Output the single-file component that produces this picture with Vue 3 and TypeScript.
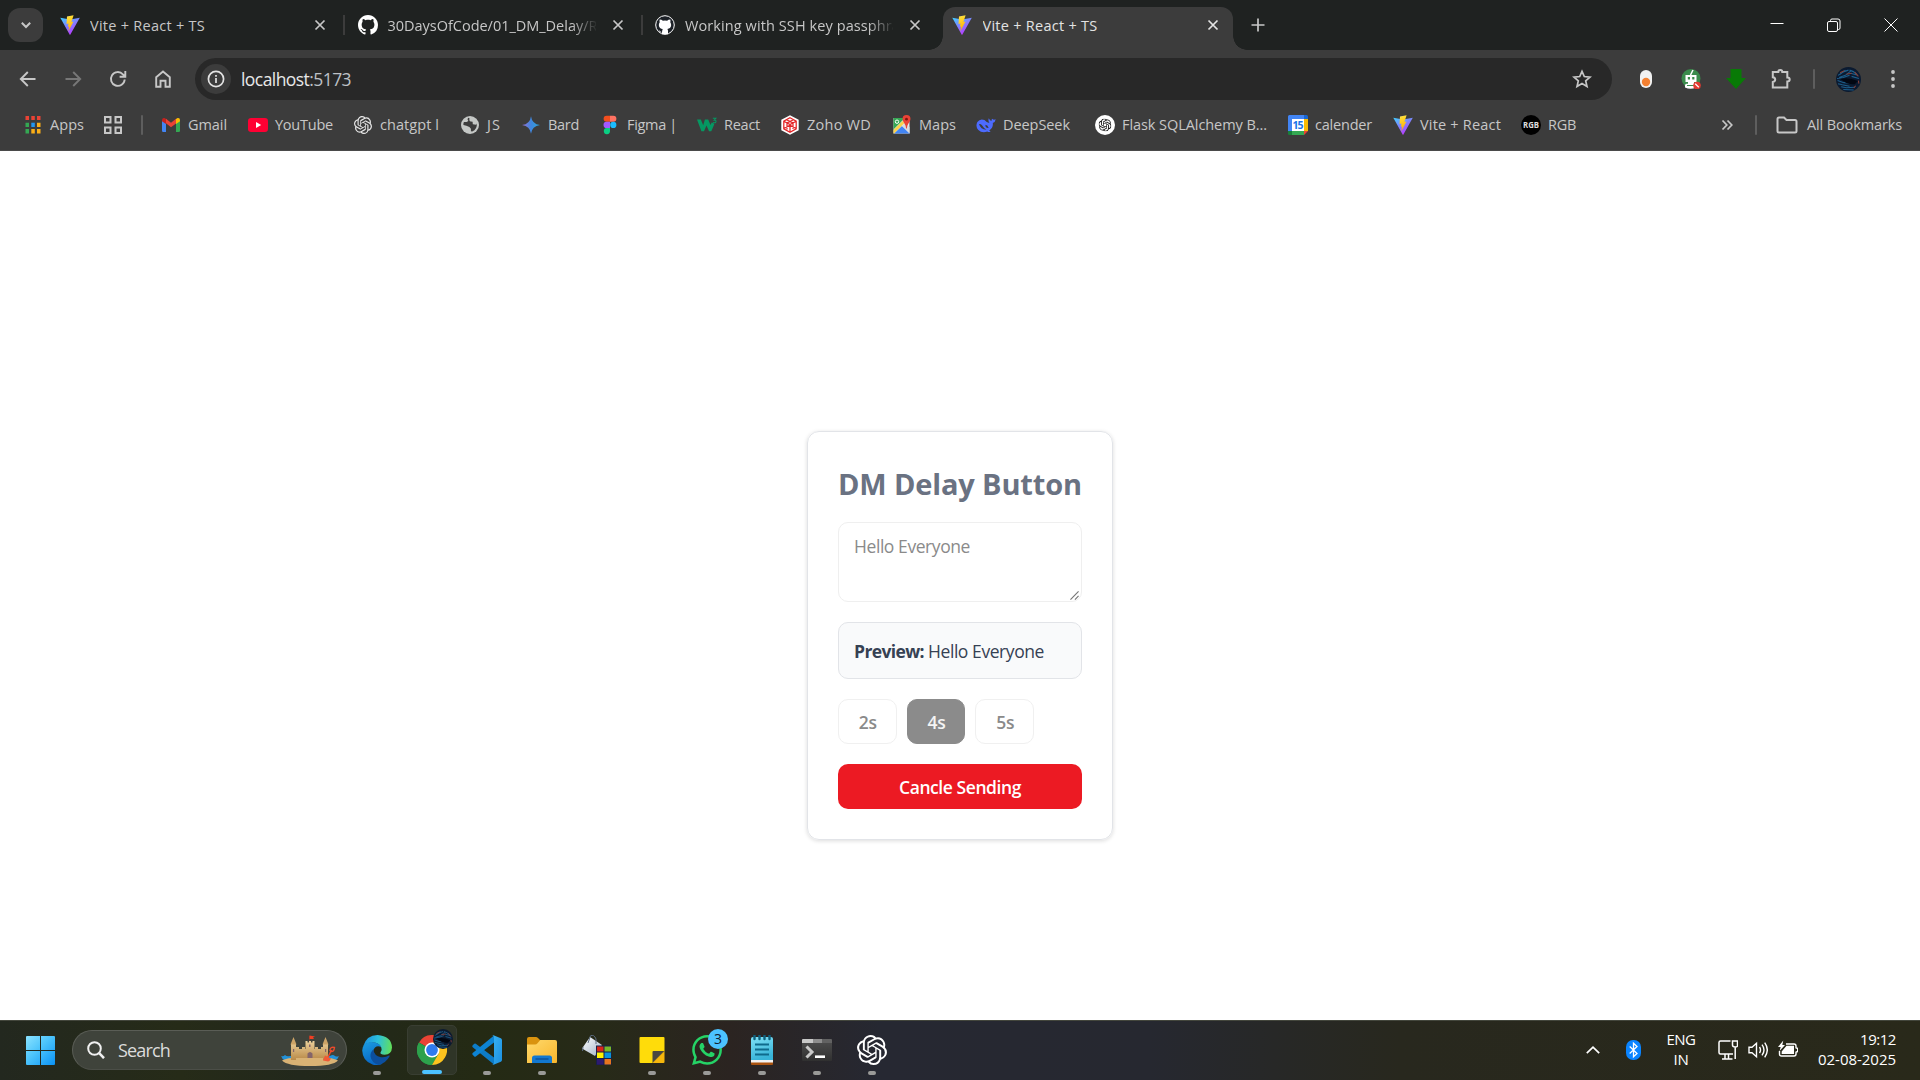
<script setup lang="ts">
import type { Directive } from 'vue'

interface Tab { icon: string; title: string; w: number; active?: boolean; cut?: boolean }
interface Bookmark { icon: string; label: string; pitch: number; w: number }
interface TaskApp { icon: string; state: 'idle' | 'open' | 'active' }

const tabs: Tab[] = [
  { icon: 'vite', title: 'Vite + React + TS', w: 115 },
  { icon: 'github', title: '30DaysOfCode/01_DM_Delay/Re', w: 218, cut: true },
  { icon: 'githubdocs', title: 'Working with SSH key passphras', w: 222, cut: true },
  { icon: 'vite', title: 'Vite + React + TS', w: 115, active: true },
]

const bookmarks: Bookmark[] = [
  { icon: 'gmail', label: 'Gmail', pitch: 87, w: 39 },
  { icon: 'youtube', label: 'YouTube', pitch: 105, w: 58 },
  { icon: 'openai', label: 'chatgpt l', pitch: 107, w: 59 },
  { icon: 'globe', label: 'JS', pitch: 61, w: 14 },
  { icon: 'bard', label: 'Bard', pitch: 79, w: 31 },
  { icon: 'figma', label: 'Figma |', pitch: 97, w: 50 },
  { icon: 'w3', label: 'React', pitch: 83, w: 36 },
  { icon: 'zoho', label: 'Zoho WD', pitch: 112, w: 64 },
  { icon: 'maps', label: 'Maps', pitch: 84, w: 37 },
  { icon: 'deepseek', label: 'DeepSeek', pitch: 119, w: 67 },
  { icon: 'flask', label: 'Flask SQLAlchemy B...', pitch: 193, w: 145 },
  { icon: 'calendar', label: 'calender', pitch: 105, w: 57 },
  { icon: 'vite', label: 'Vite + React', pitch: 128, w: 81 },
  { icon: 'rgb', label: 'RGB', pitch: 80, w: 28 },
]

const apps: TaskApp[] = [
  { icon: 'edge', state: 'open' },
  { icon: 'chrome', state: 'active' },
  { icon: 'vscode', state: 'open' },
  { icon: 'explorer', state: 'open' },
  { icon: 'paint', state: 'idle' },
  { icon: 'notes', state: 'open' },
  { icon: 'whatsapp', state: 'open' },
  { icon: 'notepad', state: 'open' },
  { icon: 'terminal', state: 'open' },
  { icon: 'openai', state: 'open' },
]

const delays = [2, 4, 5]
const selected = 4
const message = 'Hello Everyone'

// Tracks a label's letters so that it takes up exactly the given width.
const vFit: Directive<HTMLElement, number> = {
  mounted(el, { value }) {
    const count = (el.textContent ?? '').trim().length
    const natural = el.getBoundingClientRect().width
    el.style.letterSpacing = `${((value - natural) / count).toFixed(3)}px`
  },
}
</script>

<template>
  <svg class="sprite" aria-hidden="true">
    <defs>
      <linearGradient id="gv1" x1="0" y1="0" x2="0.6" y2="1"><stop offset="0" stop-color="#41d1ff" /><stop offset="1" stop-color="#bd34fe" /></linearGradient>
      <linearGradient id="gv2" x1="0.4" y1="0" x2="0.6" y2="1"><stop offset="0" stop-color="#ffea83" /><stop offset="0.1" stop-color="#ffdd35" /><stop offset="1" stop-color="#ffa800" /></linearGradient>
      <linearGradient id="gbard" x1="0" y1="0" x2="1" y2="0"><stop offset="0" stop-color="#9a72d8" /><stop offset="0.5" stop-color="#3f86dd" /><stop offset="1" stop-color="#2ba6d8" /></linearGradient>
      <linearGradient id="gwin" x1="0" y1="0" x2="1" y2="1"><stop offset="0" stop-color="#8be3ff" /><stop offset="0.45" stop-color="#4cc4fc" /><stop offset="1" stop-color="#0a92f5" /></linearGradient>
      <linearGradient id="gedge1" x1="0" y1="0.4" x2="1" y2="0.5"><stop offset="0" stop-color="#1b8ee0" /><stop offset="0.5" stop-color="#2cc0dc" /><stop offset="1" stop-color="#62e05a" /></linearGradient>
      <linearGradient id="gedge2" x1="0" y1="0" x2="0.4" y2="1"><stop offset="0" stop-color="#1b9de2" /><stop offset="1" stop-color="#0866c4" /></linearGradient>
      <linearGradient id="gfold" x1="0" y1="0" x2="1" y2="1"><stop offset="0" stop-color="#ffd96c" /><stop offset="1" stop-color="#f8b62c" /></linearGradient>
      <linearGradient id="gpad" x1="0" y1="0" x2="0.3" y2="1"><stop offset="0" stop-color="#7fe0f5" /><stop offset="1" stop-color="#38b4d8" /></linearGradient>
      <linearGradient id="gterm" x1="0" y1="0" x2="0" y2="1"><stop offset="0" stop-color="#4a4a4a" /><stop offset="1" stop-color="#303030" /></linearGradient>
      <linearGradient id="gbucket" x1="0" y1="0" x2="1" y2="1"><stop offset="0" stop-color="#ffffff" /><stop offset="1" stop-color="#9fb0c6" /></linearGradient>
      <linearGradient id="gsand" x1="0" y1="0" x2="0" y2="1"><stop offset="0" stop-color="#ecd09a" /><stop offset="1" stop-color="#b98a48" /></linearGradient>
      <linearGradient id="gcode" x1="0" y1="0" x2="1" y2="1"><stop offset="0" stop-color="#3bb4f4" /><stop offset="1" stop-color="#1b8fe0" /></linearGradient>
    </defs>
    <symbol id="vite" viewBox="0 0 20 20"><path d="M.3 2.8 9.6 19.6q.4.6.8 0L19.8 2.8 10.2 4.5Z" fill="url(#gv1)" /><path d="M13.6.2 7 1.5 6.5 9l2-.4-.6 3.2 1.3-.4-1 5.1 5.3-9.9-2.1.4Z" fill="url(#gv2)" /></symbol>
    <symbol id="github" viewBox="0 0 16 16"><path fill="#fff" d="M8 0C3.58 0 0 3.58 0 8c0 3.54 2.29 6.53 5.47 7.59.4.07.55-.17.55-.38 0-.19-.01-.82-.01-1.49-2.01.37-2.53-.49-2.69-.94-.09-.23-.48-.94-.82-1.13-.28-.15-.68-.52-.01-.53.63-.01 1.08.58 1.23.82.72 1.21 1.87.87 2.33.66.07-.52.28-.87.51-1.07-1.78-.2-3.64-.89-3.64-3.95 0-.87.31-1.59.82-2.15-.08-.2-.36-1.02.08-2.12 0 0 .67-.21 2.2.82.64-.18 1.32-.27 2-.27s1.36.09 2 .27c1.53-1.04 2.2-.82 2.2-.82.44 1.1.16 1.92.08 2.12.51.56.82 1.27.82 2.15 0 3.07-1.87 3.75-3.65 3.95.29.25.54.73.54 1.48 0 1.07-.01 1.93-.01 2.2 0 .21.15.46.55.38A8.01 8.01 0 0 0 16 8c0-4.42-3.58-8-8-8z" /></symbol>
    <symbol id="githubdocs" viewBox="0 0 20 20"><circle cx="10" cy="10" r="9.3" fill="#1c2127" stroke="#fff" stroke-width="1" /><path fill="#fff" d="M4.7 4.6q2 0 3.2 1.1 2.1-.5 4.2 0 1.2-1.1 3.2-1.1.4 1.5 0 2.6 1.1 1.5.8 3.5-.5 2.8-3.7 3.2.6.8.6 1.9v3.5H7v-2q-2.5.4-3-1.8 1 .2 1.5.9.6.8 1.6.4.1-1.7.6-2.7-3.3-.4-3.8-3.4-.3-2 .8-3.5-.4-1.200 0-2.600Z" /></symbol>
    <symbol id="openai" viewBox="0 0 24 24"><path fill="currentColor" d="M22.2819 9.8211a5.9847 5.9847 0 0 0-.5157-4.9108 6.0462 6.0462 0 0 0-6.5098-2.9A6.0651 6.0651 0 0 0 4.9807 4.1818a5.9847 5.9847 0 0 0-3.9977 2.9 6.0462 6.0462 0 0 0 .7427 7.0966 5.98 5.98 0 0 0 .511 4.9107 6.051 6.051 0 0 0 6.5146 2.9001A5.9847 5.9847 0 0 0 13.2599 24a6.0557 6.0557 0 0 0 5.7718-4.2058 5.9894 5.9894 0 0 0 3.9977-2.9001 6.0557 6.0557 0 0 0-.7475-7.0729zm-9.022 12.6081a4.4755 4.4755 0 0 1-2.8764-1.0408l.1419-.0804 4.7783-2.7582a.7948.7948 0 0 0 .3927-.6813v-6.7369l2.02 1.1686a.071.071 0 0 1 .038.052v5.5826a4.504 4.504 0 0 1-4.4945 4.4944zm-9.6607-4.1254a4.4708 4.4708 0 0 1-.5346-3.0137l.142.0852 4.783 2.7582a.7712.7712 0 0 0 .7806 0l5.8428-3.3685v2.3324a.0804.0804 0 0 1-.0332.0615L9.74 19.9502a4.4992 4.4992 0 0 1-6.1408-1.6464zM2.3408 7.8956a4.485 4.485 0 0 1 2.3655-1.9728V11.6a.7664.7664 0 0 0 .3879.6765l5.8144 3.3543-2.0201 1.1685a.0757.0757 0 0 1-.071 0l-4.8303-2.7865A4.504 4.504 0 0 1 2.3408 7.872zm16.5963 3.8558L13.1038 8.364 15.1192 7.2a.0757.0757 0 0 1 .071 0l4.8303 2.7913a4.4944 4.4944 0 0 1-.6765 8.1042v-5.6772a.79.79 0 0 0-.407-.667zm2.0107-3.0231l-.142-.0852-4.7735-2.7818a.7759.7759 0 0 0-.7854 0L9.409 9.2297V6.8974a.0662.0662 0 0 1 .0284-.0615l4.8303-2.7866a4.4992 4.4992 0 0 1 6.6802 4.66zM8.3065 12.863l-2.02-1.1638a.0804.0804 0 0 1-.038-.0567V6.0742a4.4992 4.4992 0 0 1 7.3757-3.4537l-.142.0805L8.704 5.459a.7948.7948 0 0 0-.3927.6813zm1.0976-2.3654l2.602-1.4998 2.6069 1.4998v2.9994l-2.5974 1.4997-2.6067-1.4997Z" /></symbol>
    <symbol id="flask" viewBox="0 0 20 20"><circle cx="10" cy="10" r="10" fill="#fff" /><svg x="3.500" y="3.500" width="13" height="13" color="#111"><use href="#openai" /></svg></symbol>
    <symbol id="gmail" viewBox="0 0 20 20"><path d="M1 17V5l4 3v9H2.200Q1 17 1 15.800Z" fill="#4285f4" /><path d="M15 17V8l4-3v10.800Q19 17 17.800 17Z" fill="#34a853" /><path d="M5 8.200V3.800l5 3.900 5-3.900v4.600l-5 3.900Z" fill="#ea4335" /><path d="M1 5.300Q1.200 2.500 3.500 3L5 3.900v5L1 6.200Z" fill="#c5221f" /><path d="M15 3.900 16.500 3Q19 2.500 19 5.300v.9l-4 2.900Z" fill="#fbbc04" /></symbol>
    <symbol id="youtube" viewBox="0 0 20 20"><rect y="3" width="20" height="14" rx="3.200" fill="#f03" /><path d="m8 7 5.200 3L8 13Z" fill="#fff" /></symbol>
    <symbol id="globe" viewBox="0 0 20 20"><circle cx="10" cy="10" r="9" fill="#c4c7c5" /><path d="M9.500 3.200Q8.800 6 10.800 6.500l1.800.3.200 2.400 3.300.5.700-1.300q.6 5.700-4.600 8l-1.300-.2v-2.500l-1.500-1.800-3-1.100-3-.9q-.2-1.700.5-3l2.800.1 1.600-1-.8-1.800.7-1.500Z" fill="#3c3c3c" /></symbol>
    <symbol id="bard" viewBox="0 0 20 20"><path d="M10 1.200Q11 9 19 10 11 11 10 18.800 9 11 1 10 9 9 10 1.200Z" fill="url(#gbard)" /></symbol>
    <symbol id="figma" viewBox="0 0 20 20"><path d="M10 .8v6H6.600a3 3 0 0 1 0-6Z" fill="#f24e1e" /><path d="M10 .8h3.400a3 3 0 0 1 0 6H10Z" fill="#ff7262" /><path d="M10 6.800v6.200H6.600a3.100 3.100 0 0 1 0-6.200Z" fill="#a259ff" /><circle cx="13.300" cy="9.900" r="3.100" fill="#1abcfe" /><path d="M10 13v3a3.100 3.100 0 1 1-3.400-3Z" fill="#0acf83" /></symbol>
    <symbol id="w3" viewBox="0 0 20 20"><path d="M0 4.500h3.800l2.400 5.800 1.700-5.800h3.300l2.300 5.600 1.200-2.700q2.200.3 2.600 1.900l-3 7H12L9.500 10.500 7 16.300H4.400Z" fill="#059862" /><path d="M15.800 3.300h3l-1.600 1.900q2.200.1 1.700 1.700-.7 1.400-3 .6" fill="none" stroke="#059862" stroke-width="1.100" /></symbol>
    <symbol id="zoho" viewBox="0 0 20 20"><path d="m10 .3 8.700 4.500v10.400L10 19.700l-8.700-4.500V4.800Z" fill="#fff" /><path d="m10 2.700 6.200 3.400v7.800L10 17.300l-6.200-3.400V6.100ZM3.800 6.300 10 9.500l6.200-3.200M10 9.500v7.800M6.500 4.700l6.500 3.300v6M13.500 4.700 7 8v6.500M4 13.500l6-3.300 6 3.300" fill="none" stroke="#e42527" stroke-width="1.250" /></symbol>
    <symbol id="maps" viewBox="0 0 20 20"><path d="M1.500 3h16v15.500h-16Z" fill="#e8eaed" /><path d="M1.500 3H13L1.500 14.500Z" fill="#34a853" /><path d="m2 18.500 8-7.500 8 7.500Z" fill="#4285f4" /><path d="m1.500 15 9-9 2 2-10.500 10.500h-.5Z" fill="#fbd249" /><path d="m10 11 7.500 7.500V12L13 8Z" fill="#dadce0" /><circle cx="5" cy="6.700" r="1.700" fill="none" stroke="#fff" /><path d="M14.500 0a4 4 0 0 1 4 4q0 2.200-2.200 4.700-1.200 1.400-1.500 4.800h-.7q-.2-3.300-1.500-4.800Q10.500 6.300 10.500 4a4 4 0 0 1 4-4Z" fill="#ea4335" /><circle cx="14.500" cy="4.200" r="1.400" fill="#811411" /></symbol>
    <symbol id="deepseek" viewBox="0 0 20 20"><path d="M19.700 4.300q-2.200 1.200-3.300-.5-1 .7-.9 2.300-1.500-.4-2.700-2.900-1 2.300.6 4.900Q11 8 8.500 5 4 3.200 1.400 7q-2.200 4 .7 7.700 4 4 9.200 1.800 1 .9 2.900.5.500-.4-.6-.9l-.3-.7q4.200-2.700 3.500-7.400 2.500-.8 2.900-3.700ZM10.500 14.800Q7.500 13 6 10.300 4.800 8.600 3 9q1.500 5.500 7.500 5.800Zm-1-5q2.500.6 3.100 3.200Q9 13.300 9.500 9.800Z" fill="#4d6bfe" fill-rule="evenodd" /></symbol>
    <symbol id="calendar" viewBox="0 0 20 20"><path d="M1.500 0H16v4H4v12H0V1.500Q0 0 1.500 0Z" fill="#4285f4" /><path d="M16 0h2.500Q20 0 20 1.500V4h-4Z" fill="#1967d2" /><path d="M16 4h4v12h-4Z" fill="#fbbc04" /><path d="M4 16h12v4H4Z" fill="#34a853" /><path d="M0 16h4v4H1.500Q0 20 0 18.500Z" fill="#188038" /><path d="M16 16h4l-4 4Z" fill="#ea4335" /><path d="M4 4h12v12H4Z" fill="#fff" /></symbol>
    <symbol id="rgb" viewBox="0 0 20 20"><circle cx="10" cy="10" r="10" fill="#000" /></symbol>
    <symbol id="edge" viewBox="0 0 30 30"><path d="M1 11.500Q4.500 0 15.500 0 29.500 1 30 12.500q-.3 7-7.500 7.200-4.500-.2-4-2.200 2-2 .8-5Q17 7.500 10.500 7.500 4 7.500 1 11.500Z" fill="url(#gedge1)" /><path d="M.2 15.500Q.5 7.500 9 7q8.500.2 10.200 5.300Q16 10 13 12.500q-3 3-1 8 2.500 6 8.500 8.300Q16 31 10.500 29.400.5 26 .2 15.500Z" fill="url(#gedge2)" /><path d="M11.300 14.500q.7 6.300 7.700 7.700 4.500.6 7.800-1.600 1.200-.3.700 1Q24 28 17 29.900 9.500 28 8.500 21.500q-.4-4 2.800-7Z" fill="#0c4f9e" /></symbol>
    <symbol id="chrome" viewBox="0 0 30 30"><path d="M15 15 2 7.500A15 15 0 0 1 28 7.500L15 8Z" fill="#ea4335" /><path d="M2 7.500A15 15 0 0 0 15 30l6.500-11.200L15 15Z" fill="#24a148" /><path d="M2 7.500 8.700 19Q11 22.500 15 22.500L21 19l-6 11A15 15 0 0 1 2 7.500Z" fill="#2da14c" /><path d="M15 30A15 15 0 0 0 28 7.500H15l6.500 11.300Z" fill="#fcc31e" /><circle cx="15" cy="15" r="7.500" fill="#fff" /><circle cx="15" cy="15" r="5.900" fill="#2f7bee" /></symbol>
    <symbol id="avatar" viewBox="0 0 24 24"><circle cx="12" cy="12" r="12" fill="#0b1a30" /><path d="M2 8q5-4 10-5M3 10l6-2 5-4M1.500 13l6 2 6 .5M2 16l4 1 7 1.500M5 19l5 1 8-.5M7 21.500l10 .5M13 3q4 1 7 4M14 6l7 2M15 9l7 2M1 11l6-1 6-2M4 7l5-4" fill="none" stroke="#1d5f8c" stroke-width="1" /><path d="M4 11.500q8-2 17 2l-3 3q-7 .5-10-2.500Z" fill="#020712" /><path d="m4 5.500 4-2M18 5l3.500 4M21.500 13l.5 3M10 7l5-1M19 18l-2 2" fill="none" stroke="#8a3f36" stroke-width="1" /></symbol>
    <symbol id="vscode" viewBox="0 0 30 30"><path d="M.7 10.300 2.300 8.700q.7-.5 1.500 0L22 22.500v7L.7 12.200q-.8-1 0-1.900Z" fill="#0d7cc8" /><path d="m.7 19.800 1.600 1.600q.7.5 1.500 0L22 7.500v-7L.7 17.900q-.8 1 0 1.900Z" fill="#0d84d4" /><path d="M21.500.2 28.800 3.300Q30 4 30 5.300v19.400q0 1.300-1.200 2l-7.300 3.100q-1 .2-2-.8 2.500 1.400 2.500-1.500v-25Q22-.4 19.500 1q1-1 2-.8Z" fill="url(#gcode)" /></symbol>
    <symbol id="explorer" viewBox="0 0 30 30"><path d="M0 4q0-2 2-2h7q1 0 2 1l2 2h6v8H0Z" fill="#d9930f" /><path d="M0 9.500h8q1.500 0 2.500-1.200L13.300 5H28q2 0 2 2v20q0 1-1 1H0Z" fill="url(#gfold)" /><path d="M5 28v-5q0-2.500 2.500-2.500h15Q25 20.500 25 23v5Z" fill="#1278d0" /><path d="M8.500 24h13" stroke="#0b4c94" stroke-width="1.300" /></symbol>
    <symbol id="paint" viewBox="0 0 30 30"><path d="m8 2 12 8-7 11L0 13.500Z" fill="url(#gbucket)" /><path d="M6 8 8.500.8Q12-1 14 4v5M1 12l-.5 4" fill="none" stroke="#5b6b80" stroke-width="1" /><rect x="14" y="10.500" width="15.500" height="19.500" fill="#16204a" /><path d="M15 11.500h6.500v5H15Z" fill="#d92518" /><path d="M22.500 11.500h6.500v5h-6.500Z" fill="#78b829" /><path d="M15 17.500h6.500v5.500H15Z" fill="#fff200" /><path d="M22.500 17.500h6.500v5.500h-6.500Z" fill="#0a93dc" /><path d="M15 24h6.500v5.500H15Z" fill="#2e1a70" /><path d="M22.500 24h6.500v5.500h-6.500Z" fill="#e8751f" /></symbol>
    <symbol id="notes" viewBox="0 0 30 30"><path d="M3.500 2h23q1 0 1 1v13l-12 12h-12q-1 0-1-1V3q0-1 1-1Z" fill="#ffdc0a" /><path d="M15.500 28V17q0-1 1-1h11Z" fill="#4a4740" /><path d="M15.500 28h11q1 0 1-1V16Z" fill="#f6b70c" /></symbol>
    <symbol id="whatsapp" viewBox="0 0 24 24"><path fill="#25d366" d="M17.472 14.382c-.297-.149-1.758-.867-2.030-.967-.273-.099-.471-.148-.67.15-.197.297-.767.966-.94 1.164-.173.199-.347.223-.644.075-.297-.15-1.255-.463-2.390-1.475-.883-.788-1.480-1.761-1.653-2.059-.173-.297-.018-.458.13-.606.134-.133.298-.347.446-.52.149-.174.198-.298.298-.497.099-.198.05-.371-.025-.52-.075-.149-.669-1.612-.916-2.207-.242-.579-.487-.5-.669-.51-.173-.008-.371-.01-.57-.01-.198 0-.52.074-.792.372-.272.297-1.040 1.016-1.040 2.479 0 1.462 1.065 2.875 1.213 3.074.149.198 2.096 3.200 5.077 4.487.709.306 1.262.489 1.694.625.712.227 1.360.195 1.871.118.571-.085 1.758-.719 2.006-1.413.248-.694.248-1.289.173-1.413-.074-.124-.272-.198-.57-.347m-5.421 7.403h-.004a9.870 9.870 0 01-5.031-1.378l-.361-.214-3.741.982.998-3.648-.235-.374a9.860 9.860 0 01-1.510-5.260c.001-5.450 4.436-9.884 9.888-9.884 2.640 0 5.122 1.030 6.988 2.898a9.825 9.825 0 012.893 6.994c-.003 5.450-4.437 9.884-9.885 9.884m8.413-18.297A11.815 11.815 0 0012.050 0C5.495 0 .16 5.335.157 11.892c0 2.096.547 4.142 1.588 5.945L.057 24l6.305-1.654a11.882 11.882 0 005.683 1.448h.005c6.554 0 11.890-5.335 11.893-11.893a11.821 11.821 0 00-3.480-8.413z" /></symbol>
    <symbol id="notepad" viewBox="0 0 30 30"><path d="M4 26h22v3q0 1-1 1H5q-1 0-1-1Z" fill="#a9520f" /><path d="M4 24h22v3.500H4Z" fill="#f2f2f2" /><path d="M4 4q0-2 2-2h18q2 0 2 2v21H4Z" fill="url(#gpad)" /><path d="M7.500 0v4M12.500 0v4M17.500 0v4M22.500 0v4" stroke="#0e5f7c" stroke-width="2.400" stroke-linecap="round" /><path d="M8 9.500h14M8 14.500h14M8 19.500h14" stroke="#0f6a8c" stroke-width="1.800" /></symbol>
    <symbol id="terminal" viewBox="0 0 30 30"><path d="M0 8h30v17q0 1-1 1H1q-1 0-1-1Z" fill="url(#gterm)" /><path d="M0 8V5q0-1 1-1h10v4Z" fill="#c8c8c8" /><path d="M11 4h9v4h-9Z" fill="#8e8e8e" /><path d="M20 4h9q1 0 1 1v3H20Z" fill="#626262" /><path d="m4.500 11.500 5.500 5.500-5.500 5.500" fill="none" stroke="#c9c9c9" stroke-width="3" /><path d="M13 21.700h10" stroke="#fff" stroke-width="2.600" /></symbol>
    <symbol id="castle" viewBox="0 0 60 31"><path d="M1 21q2 1 4-1 2 2 5 1h40q3-2 5 0 2 1 4 0-2 6-11 6H12Q3 27 1 21Z" fill="#2291d8" /><path d="M2 25.500q6-3.500 28-3.500t28 3.500Q53 31 30 31T2 25.500Z" fill="#d9b274" /><path d="M11 9h5v16h-5ZM43 9h5v16h-5ZM16 12h3v2h3v-2h3v2h10v-2h3v2h3v-2h2v11H16ZM25.500 6h2v1.500h1.500V6h2v1.500h1.500V6h2v8h-9Z" fill="url(#gsand)" /><path d="m10.500 9.500 3-7.500 3 7.500ZM42.500 9.500l3-7.500 3 7.500Z" fill="#cda467" /><path d="M27.500 23v-4.500q2.500-3 5 0V23ZM29 9.500h1.500V12H29ZM13 14h1.200v3H13ZM45 14h1.200v3H45Z" fill="#84656a" /><path d="M29.500 1v5" stroke="#8c3a28" stroke-width=".8" /><path d="M29.500.5 35 1.500l-2 1 1 1.500h-4.500Z" fill="#ef3f23" /><path d="m51.500 15-4 8" stroke="#ed4a2b" stroke-width="1.600" /><path d="M50 15.500q0-4 4.500-3-.5 4.500-3.500 4Z" fill="none" stroke="#ed4a2b" stroke-width="1.400" /><path d="m45 20.500 6 3q-1 2.500-3 3l-5-1Z" fill="#f05a36" /></symbol>
  </svg>

  <div class="screen">
    <header class="strip">
      <button class="tabsearch"><svg viewBox="0 0 12 12" class="s12"><path d="m1.800 3.800 4.200 4.200 4.200-4.200" class="ln w2" /></svg></button>
      <div v-for="(t, i) in tabs" :key="i" class="tab" :class="{ active: t.active }">
        <svg class="s20"><use :href="'#' + t.icon" /></svg>
        <div class="title" :class="{ cut: t.cut }"><span v-fit="t.w">{{ t.title }}</span></div>
        <svg viewBox="0 0 12 12" class="s12"><path d="m1.500 1.500 9 9M10.500 1.500l-9 9" class="ln w17" /></svg>
      </div>
      <svg viewBox="0 0 14 14" class="plus"><path d="M7 .5v13M.5 7h13" class="ln w17" /></svg>
      <div class="winctl">
        <svg viewBox="0 0 14 14"><path d="M.5 5.500h13" class="ln w1" /></svg>
        <svg viewBox="0 0 14 14"><path d="M3.500 3V2.500q0-1.500 1.500-1.500h6q2 0 2 2v7q0 1.500-1.500 1.500H11" class="ln w1" /><rect x=".5" y="3.500" width="10" height="10" rx="1.500" class="ln w1" /></svg>
        <svg viewBox="0 0 14 14"><path d="m.5.500 13 13M13.500.500l-13 13" class="ln w1" /></svg>
      </div>
    </header>

    <div class="chrome">
      <div class="toolbar">
        <svg viewBox="0 0 20 20"><path d="M17.500 10H3M9.800 3 2.800 10l7 7" class="ln w19" /></svg>
        <svg viewBox="0 0 20 20" class="off"><path d="M2.500 10H17M10.200 3l7 7-7 7" class="ln w19" /></svg>
        <svg viewBox="0 0 20 20"><path d="M16.700 10.500A6.900 6.900 0 1 1 14.900 5.300L17 7.500M17.300 2v5.800h-5.700" class="ln w19" /></svg>
        <svg viewBox="0 0 20 20"><path d="M3.200 17.800V8.200L10 2.600l6.800 5.600v9.600h-4.300v-6h-5v6Z" class="ln w19" /></svg>
        <div class="omnibox">
          <span class="info"><svg viewBox="0 0 18 18"><circle cx="9" cy="9" r="7.600" class="ln w17" /><path d="M9 8v5M9 5v1.800" class="ln w17" /></svg></span>
          <span class="url"><span v-fit="110">localhost<i>:5173</i></span></span>
          <svg viewBox="0 0 20 20" class="star"><path d="m10 2.300 2.300 5.200 5.700.6-4.300 3.800 1.300 5.600-5-3-5 3 1.300-5.600L2 8.100l5.700-.6Z" class="ln w17" /></svg>
        </div>
        <div class="ext">
          <svg viewBox="0 0 20 20"><rect x="4" y="1" width="12" height="18" rx="6" fill="#f1f1f1" /><circle cx="10" cy="13" r="4.200" fill="#f38031" /></svg>
          <svg viewBox="0 0 20 20"><circle cx="10" cy="9.500" r="9.500" fill="#3b8b4c" /><path d="M12 1 9.500 6" stroke="#fff" stroke-width="1.500" /><path d="M4.500 6h11v7h-11ZM7 13h6v2H7ZM4 16.500q0-2 3-2h6q2 0 2 2v2q-5.500 2.500-11 0Z" fill="#fff" /><path d="M6.800 8h2.200v2.500H6.800ZM11.200 8h2.200v2.500h-2.200ZM6 16h7v1H6Z" fill="#3b8b4c" /><circle cx="16" cy="16.500" r="3.800" fill="#e33b32" /><path d="m14.200 14.800 3.600 3.400" stroke="#fff" stroke-width="1.200" /></svg>
          <svg viewBox="0 0 20 20"><path d="M4.500 0h11v9H20L10 20 0 9h4.500Z" fill="#087a06" /></svg>
          <svg viewBox="0 0 20 20"><path d="M1.800 3h5.500q0-2 2-2t2 2h5v5.500q2.400 0 2.400 2t-2.400 2V18.500H1.800V13q2.400-.4 2.400-2.400T1.800 8.300Z" class="ln w2" /></svg>
          <b class="sep"></b>
          <svg class="me"><use href="#avatar" /></svg>
          <svg viewBox="0 0 20 20" class="dots"><circle cx="10" cy="3" r="1.900" /><circle cx="10" cy="10" r="1.900" /><circle cx="10" cy="17" r="1.900" /></svg>
        </div>
      </div>

      <nav class="marks">
        <span class="apps"><svg viewBox="0 0 16 18"><g fill="#ea4335"><path d="M.5 0h3.500v4H.5Z" /><path d="M6.300 0h3.500v4H6.300Z" /><path d="M12 0h3.500v4H12Z" /></g><path fill="#34a853" d="M.5 6.700H4v4.300H.5ZM.5 13H4v4.500H.5Z" /><path fill="#2196f3" d="M6.300 6.700h3.500v4.300H6.300Z" /><path fill="#fbae17" d="M12 6.700h3.500v4.300H12ZM6.300 13h3.500v4.500H6.300ZM12 13h3.500v4.500H12Z" /></svg><span v-fit="34">Apps</span></span>
        <svg class="grid" viewBox="0 0 18 18"><path d="M1 1h5.500v5.500H1ZM11.500 1H17v5.500h-5.500ZM1 11.500h5.500V17H1ZM11.500 11.500H17V17h-5.500Z" class="ln w2" /></svg>
        <b class="sep"></b>
        <span v-for="b in bookmarks" :key="b.label" class="mark" :class="b.icon" :style="{ width: b.pitch + 'px' }">
          <svg class="s20">
            <use :href="'#' + b.icon" />
            <text v-if="b.icon === 'calendar'" x="10" y="14.200" text-anchor="middle" font-size="10.500" font-weight="700" fill="#1a73e8" textLength="11">15</text>
            <text v-if="b.icon === 'rgb'" x="10" y="13" text-anchor="middle" font-size="8" font-weight="700" fill="#ddd" textLength="16" lengthAdjust="spacingAndGlyphs">RGB</text>
          </svg>
          <span v-fit="b.w">{{ b.label }}</span>
        </span>
        <span class="end">
          <svg viewBox="0 0 12 12" class="more"><path d="m1.500 1.500 4.300 4.500-4.300 4.500M6.500 1.500l4.300 4.500-4.300 4.500" class="ln w17" /></svg>
          <b class="sep"></b>
          <svg viewBox="0 0 22 18" class="folder"><path d="M1.500 3q0-1.500 1.500-1.500h5l2.500 2.500H19q1.500 0 1.500 1.500V15q0 1.500-1.500 1.500H3q-1.500 0-1.500-1.500Z" class="ln w2" /></svg>
          <span v-fit="95">All Bookmarks</span>
        </span>
      </nav>
    </div>

    <main class="page">
      <section class="card">
        <h1><span v-fit="244">DM Delay Button</span></h1>
        <div class="field"><span v-fit="116">{{ message }}</span>
          <svg viewBox="0 0 10 10"><path d="M.5 9.500l9-9M5.500 9.500l4-4" stroke="#777" stroke-width="1.300" /></svg>
        </div>
        <p class="preview"><strong v-fit="70">Preview:</strong><span v-fit="116">{{ message }}</span></p>
        <div class="delays">
          <button v-for="d in delays" :key="d" :class="{ on: d === selected }"><span v-fit="18">{{ d }}s</span></button>
        </div>
        <button class="cancel"><span v-fit="122">Cancle Sending</span></button>
      </section>
    </main>

    <footer class="taskbar">
      <svg viewBox="0 0 29 29" class="win"><path d="M1 0h13v14H0V1q0-1 1-1ZM15 0h13q1 0 1 1v13H15ZM0 15h14v14H1q-1 0-1-1ZM15 15h14v13q0 1-1 1H15Z" fill="url(#gwin)" /></svg>
      <div class="search">
        <svg viewBox="0 0 18 18" class="mag"><circle cx="7.500" cy="7.500" r="6.300" class="ln w2" /><path d="m12.200 12.200 4.800 5" class="ln w25" /></svg>
        <span v-fit="52">Search</span>
        <svg class="castle"><use href="#castle" /></svg>
      </div>
      <div class="running">
        <div v-for="a in apps" :key="a.icon" class="app" :class="[a.state, a.icon]">
          <svg class="s30"><use :href="'#' + a.icon" /></svg>
          <svg v-if="a.icon === 'chrome'" class="profile"><use href="#avatar" /></svg>
          <em v-if="a.icon === 'whatsapp'">3</em>
        </div>
      </div>
      <div class="tray">
        <svg viewBox="0 0 14 8" class="up"><path d="m.8 7.200 6.200-6 6.200 6" class="ln w17" /></svg>
        <svg viewBox="0 0 15 20" class="bt"><rect width="15" height="20" rx="7" fill="#0a84ff" /><path d="m3.700 6.500 7.300 7-3.500 3.200V3.300L11 6.500l-7.300 7" fill="none" stroke="#fff" stroke-width="1.300" /></svg>
        <div class="lang"><span v-fit="29">ENG</span><span v-fit="15">IN</span></div>
        <svg viewBox="0 0 20 20" class="net"><path d="M12.500 1H2.500Q1 1 1 2.500v10Q1 14 2.500 14H15M7 14.500v4M10.500 14.500v4M4 19h10.500M17.200 7v12M14.500 1v4q0 2 2.700 2T19.500 5V1Z" class="ln w15" /></svg>
        <svg viewBox="0 0 20 20" class="vol"><path d="M1 7.200h3l4.500-4v13.600l-4.500-4H1ZM11.500 7q2 3 0 6M14 4.700q4 5.300 0 10.600M16.700 2.700q5.200 7.300 0 14.600" class="ln w14" /></svg>
        <svg viewBox="0 0 20 20" class="bat"><path d="M8 4h8q2 0 2 2v1.800l1.700.7v3l-1.700.7V14q0 2-2 2H3.500q-2 0-2-2v-3" class="ln w14" /><path d="M8.500 5.800h7.500V14H3.700v-2.500ZM5.300.500 0 7h2.700L1.500 11 7 5H4.300Z" fill="#fff" /></svg>
        <div class="clock"><span v-fit="36">19:12</span><span v-fit="78">02-08-2025</span></div>
      </div>
    </footer>
  </div>
</template>

<style>
body { margin: 0; overflow: hidden; background: #fff; }
</style>

<style scoped>
* { box-sizing: border-box; }
.sprite { position: absolute; width: 0; height: 0; }
.screen { width: 1920px; height: 1080px; display: flex; flex-direction: column; font-family: "Open Sans", "Noto Sans", sans-serif; font-size: 15px; color: #c7c7c7; overflow: hidden; }
svg { flex: none; display: block; }
span { white-space: nowrap; }
button { border: 0; padding: 0; font: inherit; color: inherit; }
.ln { fill: none; stroke: currentColor; }
.w1 { stroke-width: 1; } .w14 { stroke-width: 1.4; } .w15 { stroke-width: 1.5; } .w17 { stroke-width: 1.7; } .w19 { stroke-width: 1.9; } .w2 { stroke-width: 2; } .w25 { stroke-width: 2.5; }
.s12 { width: 12px; height: 12px; } .s20 { width: 20px; height: 20px; } .s30 { width: 30px; height: 30px; }
.sep { width: 2px; height: 20px; background: #5e5e5e; border-radius: 1px; flex: none; }

.strip { height: 50px; flex: none; background: #1f2221; display: flex; font-size: 14.5px; }
.tabsearch { width: 35px; height: 34px; margin: 8px 6px 0 8px; border-radius: 12px; background: #3c3c3c; display: flex; align-items: center; justify-content: center; }
.tab { position: relative; width: 291px; margin: 7px 6.500px 0 0; height: 43px; padding: 0 14px 7px 11px; display: flex; align-items: center; border-radius: 12px 12px 0 0; }
.tab:not(.active):nth-of-type(-n+2)::after { content: ""; position: absolute; right: -5px; top: 8px; width: 2px; height: 20px; background: #3c3c3c; }
.tab .title { flex: 1; margin-left: 10px; margin-right: 16px; padding-top: 1px; overflow: hidden; line-height: 21px; }
.tab .title.cut { -webkit-mask-image: linear-gradient(90deg, #000 88%, transparent 101%); mask-image: linear-gradient(90deg, #000 88%, transparent 101%); }
.tab.active { width: 290px; margin-left: 1px; padding: 0 14px 7px 9px; background: #3c3c3c; color: #e3e3e3; }
.tab.active .title { margin-left: 11px; }
.tab.active::before, .tab.active::after { content: ""; position: absolute; bottom: 0; width: 14px; height: 14px; }
.tab.active::before { left: -14px; background: radial-gradient(circle at 0 0, transparent 13.500px, #3c3c3c 14px); }
.tab.active::after { right: -14px; background: radial-gradient(circle at 100% 0, transparent 13.500px, #3c3c3c 14px); }
.plus { width: 14px; height: 14px; margin: 18px 0 0 12px; }
.winctl { margin-left: auto; display: flex; gap: 43px; padding: 18px 22px 0 0; color: #fff; }
.winctl svg { width: 14px; height: 14px; }

.chrome { height: 101px; flex: none; background: #3c3c3c; border-bottom: 1px solid #4a4a4a; position: relative; }
.toolbar { height: 58px; display: flex; align-items: center; padding-left: 17.500px; }
.toolbar > svg { width: 20px; height: 20px; margin-right: 25px; }
.toolbar > .off { color: #777; }
.omnibox { width: 1417px; height: 42px; margin-left: -2.500px; border-radius: 21px; background: #282828; display: flex; align-items: center; padding: 0 20px 0 6px; }
.info { width: 30px; height: 30px; border-radius: 50%; background: #3c3c3c; display: flex; align-items: center; justify-content: center; color: #e3e3e3; }
.info svg { width: 18px; height: 18px; }
.url { flex: 1; margin-left: 10px; font-size: 17.500px; line-height: 26px; color: #e8e8e8; }
.url i { font-style: normal; color: #bdc1c6; }
.star { width: 20px; height: 20px; }
.ext { flex: 1; display: flex; align-items: center; margin-left: 23.500px; }
.ext svg { width: 20px; height: 20px; margin-right: 25.300px; }
.ext .sep { margin: 0 21px 0 -4px; }
.ext .me { width: 25px; height: 25px; margin-right: 22px; }
.ext .dots { margin: 0; fill: #c7c7c7; }
.marks { display: flex; align-items: center; height: 34px; font-size: 14.500px; line-height: 20px; }
.apps { display: flex; align-items: center; gap: 9px; width: 79px; margin-left: 25px; }
.apps svg { width: 16px; height: 18px; }
.grid { width: 18px; height: 18px; margin-right: 19px; }
.marks > .sep { margin-right: 18px; }
.mark { display: flex; align-items: center; gap: 7px; flex: none; }
.mark.openai svg { width: 18px; height: 18px; margin: 0 1px; color: #e6e6e6; }
.end { display: flex; align-items: center; margin-left: auto; padding-right: 18px; }
.more { width: 12px; height: 12px; margin-right: 22px; }
.folder { width: 22px; height: 18px; margin: 0 9px 0 19px; }

.page { flex: 1; background: #fff; display: flex; justify-content: center; align-items: flex-start; padding-top: 280px; }
.card { width: 306px; height: 409px; border: 1px solid #e2e4e8; border-radius: 12px; padding: 30px; box-shadow: 0 1px 4px rgba(0, 0, 0, .14); display: flex; flex-direction: column; font-size: 17.500px; line-height: 25px; }
h1 { margin: 0 0 18px; padding-top: 2px; font-size: 29px; line-height: 40px; font-weight: 700; color: #6a7282; }
.field { position: relative; height: 80px; border: 1px solid #efefef; border-radius: 10px; padding: 11px 15px; color: #8a8a8a; margin-bottom: 20px; }
.field svg { position: absolute; width: 9px; height: 9px; right: 2px; bottom: 1px; }
.preview { margin: 0 0 20px; height: 57px; border: 1px solid #e2e4e8; border-radius: 10px; background: #f9fafb; padding: 16px 15px; color: #364153; display: flex; gap: 4px; }
.delays { display: flex; gap: 10px; margin-bottom: 20px; }
.delays button { width: 58.700px; height: 45px; padding: 2px 0 0 1px; border: 1px solid #f0f0f0; border-radius: 10px; background: #fff; color: #8a8a8a; font-weight: 600; }
.delays .on { background: #8b8b8b; border-color: #8b8b8b; color: #f4f4f4; }
.cancel { height: 45px; padding-top: 2px; border-radius: 10px; background: #ec1a23; color: #fff; font-weight: 600; }

.taskbar { height: 60px; flex: none; border-top: 1px solid #43463c; padding-bottom: 1px; display: flex; align-items: center; color: #fff; background: linear-gradient(90deg, #23281f 0, #262b18 180px, #22281c 300px, #242a14 480px, #272a18 600px, #2b2421 730px, #262832 880px, #262830 1150px, #28281e 1400px, #29291a 100%); }
.win { width: 29px; height: 29px; margin: 0 17px 0 26px; }
.search { width: 275px; height: 40px; border-radius: 20px; background: #3f433b; border: 1px solid #5a5d56; border-bottom-color: #4b4e47; display: flex; align-items: center; padding: 0 6px 0 14px; font-size: 18px; line-height: 24px; color: #dcdcdc; }
.mag { width: 18px; height: 18px; margin-right: 13px; color: #f0f0f0; }
.castle { width: 60px; height: 31px; margin-left: auto; }
.running { display: flex; gap: 5px; margin-left: 5px; }
.app { position: relative; width: 50px; height: 50px; display: flex; align-items: center; justify-content: center; border-radius: 5px; }
.app.active { background: #2f3527; border: 1px solid #393e32; }
.app.open::after, .app.active::after { content: ""; position: absolute; bottom: 0; left: 21px; width: 8px; height: 4px; border-radius: 2px; background: #9a9a98; }
.app.active::after { left: 14px; width: 20px; background: #4cc2ff; }
.profile { position: absolute; left: 25px; top: 3px; width: 20px; height: 20px; }
.app em { position: absolute; left: 26px; top: 4px; width: 20px; height: 20px; border-radius: 50%; background: #4cc2ff; color: #102030; font: 14px/20px "Open Sans", sans-serif; text-align: center; }
.tray { margin-left: auto; display: flex; align-items: center; padding-right: 24px; line-height: 20px; font-size: 15px; }
.up { width: 14px; height: 8px; margin-right: 26px; }
.bt { width: 15px; height: 20px; margin-right: 25px; }
.lang, .clock { display: flex; flex-direction: column; padding-bottom: 2px; }
.lang { width: 30px; align-items: center; margin-right: 22px; }
.clock { width: 78px; align-items: flex-end; }
.net, .vol, .bat { width: 20px; height: 20px; margin-right: 10px; }
.bat { margin-right: 20px; }
</style>
